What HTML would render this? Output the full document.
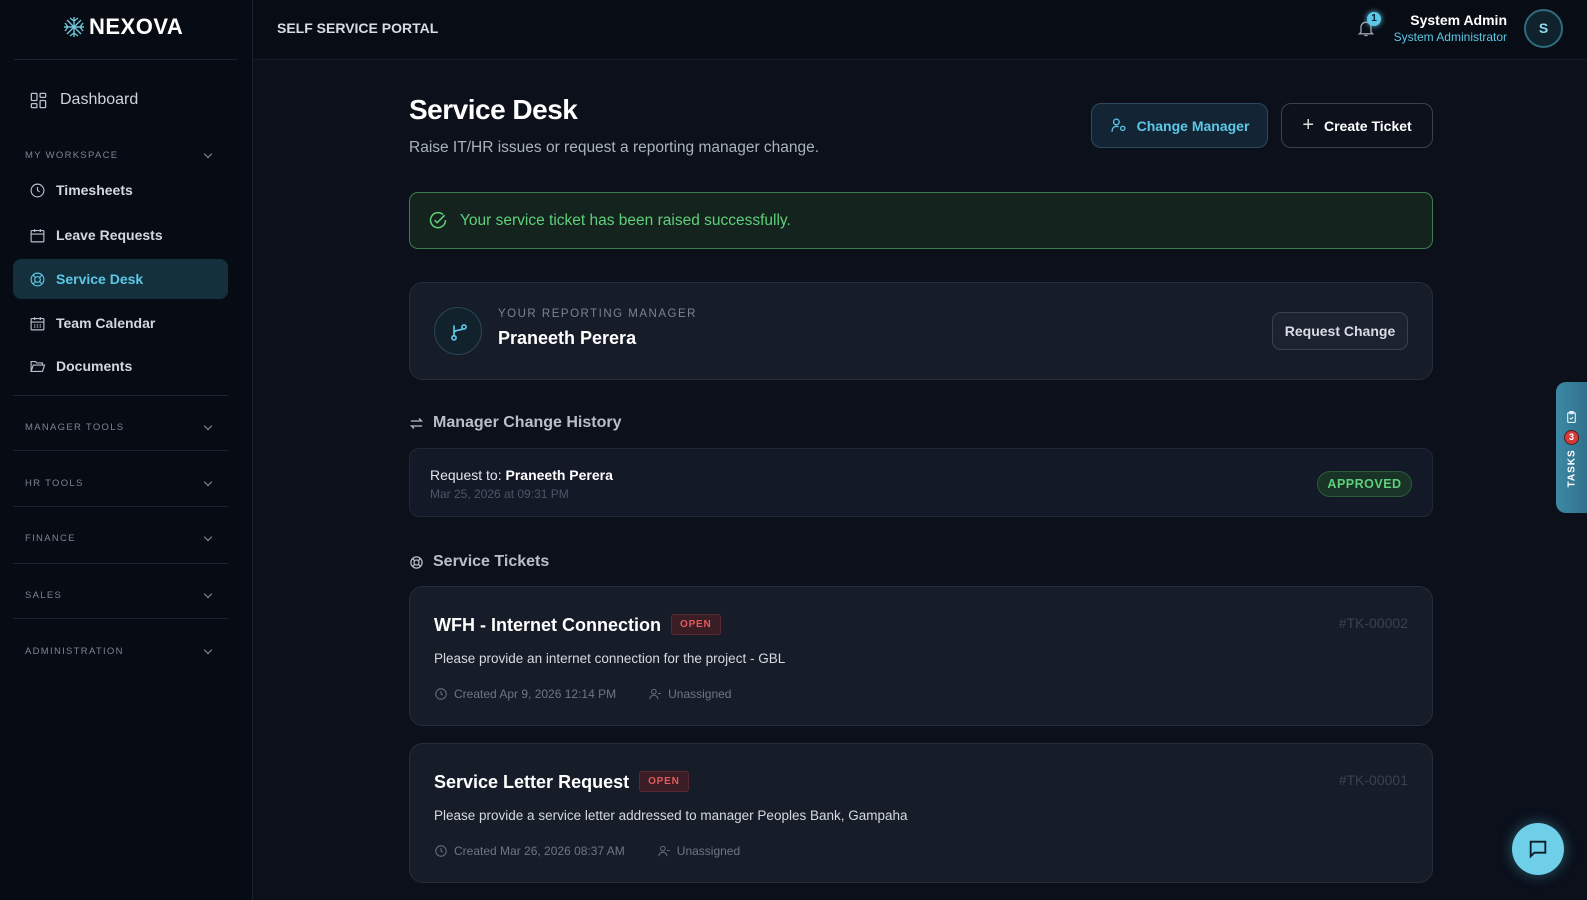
<!DOCTYPE html>
<html><head><meta charset="utf-8"><style>
*{box-sizing:border-box;margin:0;padding:0}
body{width:1587px;height:900px;overflow:hidden;background:#0b101b;font-family:"Liberation Sans",sans-serif;color:#e5e7eb;position:relative}
.sb{position:absolute;left:0;top:0;width:253px;height:900px;background:#070b13;border-right:1px solid #1a2130}
.logo{position:absolute;left:63px;top:14px;font-weight:bold;font-size:22px;color:#fff;letter-spacing:.5px;display:flex;align-items:center;gap:4px}
.lsep{position:absolute;left:14px;width:223px;top:59px;border-top:1px solid #1c2331}
.hdr{position:absolute;left:253px;top:0;right:0;height:60px;background:#080c15;border-bottom:1px solid #161d2a}
.it{position:absolute;left:13px;width:215px;height:40px;display:flex;align-items:center;padding-left:16px;gap:10px;font-size:14px;font-weight:bold;color:#d3d8e0}
.it svg{width:17px;height:17px;stroke:#b9c0cc;fill:none;stroke-width:1.6}
.act{background:#15303d;color:#5cc8e6;border-radius:8px}
.act svg{stroke:#5cc8e6}
.sec{position:absolute;left:25px;width:190px;font-size:9.5px;letter-spacing:1.3px;color:#7b8494;display:flex;justify-content:space-between;align-items:center}
.sec::after{content:"";width:5px;height:5px;border-right:1.3px solid #8a93a2;border-bottom:1.3px solid #8a93a2;transform:rotate(45deg);margin-right:4px;margin-top:-3px}
.hs{position:absolute;left:13px;width:215px;border-top:1px solid #1c2331}
.card{position:absolute;left:409px;width:1024px;border:1px solid #262e3c;background:#161c28;border-radius:14px}
.btn{position:absolute;top:103px;height:45px;border-radius:10px;display:flex;align-items:center;justify-content:center;gap:10px;font-weight:bold;font-size:14px}
.open{display:inline-block;font-size:10px;font-weight:bold;color:#e05b5b;background:#3b1d25;border:1px solid #5a2a31;border-radius:3px;padding:4px 8px;letter-spacing:.8px;vertical-align:middle;margin-left:10px;position:relative;top:-2px}
.tt{position:absolute;left:24px;font-size:18px;font-weight:bold;color:#fff}
.td{position:absolute;left:24px;font-size:13.5px;color:#d5d9e0}
.tm{position:absolute;left:24px;font-size:12px;color:#6e7685;display:flex;align-items:center;gap:6px}
.tm svg{width:14px;height:14px;stroke:#6e7685;fill:none;stroke-width:1.6}
.tid{position:absolute;right:24px;font-size:14px;color:#3a4252}
</style></head><body>
<div class="sb">
 <div class="logo"><svg width="22" height="22" viewBox="0 0 22 22" stroke="#6fc6d8" stroke-width="1.4"><path d="M11 1v20M1 11h20M4 4l14 14M18 4L4 18M7 2l4 3 4-3M7 20l4-3 4 3M2 7l3 4-3 4M20 7l-3 4 3 4"/></svg>NEXOVA</div>
 <div class="lsep"></div>
 <div class="it" style="top:80px;font-weight:normal;font-size:16px;color:#cfd4dc;gap:12px"><svg style="width:19px;height:19px" viewBox="0 0 24 24"><rect x="3" y="3" width="7" height="9" rx="1"/><rect x="14" y="3" width="7" height="5" rx="1"/><rect x="14" y="12" width="7" height="9" rx="1"/><rect x="3" y="16" width="7" height="5" rx="1"/></svg>Dashboard</div>
 <div class="sec" style="top:150px">MY WORKSPACE</div>
 <div class="it" style="top:170px"><svg viewBox="0 0 24 24"><circle cx="12" cy="12" r="9"/><path d="M12 7v5l3 2"/></svg>Timesheets</div>
 <div class="it" style="top:215px"><svg viewBox="0 0 24 24"><rect x="3" y="5" width="18" height="16" rx="1"/><path d="M3 10h18M8 3v4M16 3v4"/></svg>Leave Requests</div>
 <div class="it act" style="top:259px"><svg viewBox="0 0 24 24"><circle cx="12" cy="12" r="9"/><circle cx="12" cy="12" r="4"/><path d="M5.6 5.6l3.6 3.6M14.8 14.8l3.6 3.6M18.4 5.6l-3.6 3.6M9.2 14.8l-3.6 3.6"/></svg>Service Desk</div>
 <div class="it" style="top:303px"><svg viewBox="0 0 24 24"><rect x="3" y="5" width="18" height="16" rx="1"/><path d="M3 10h18M8 3v4M16 3v4M7 14h2M11 14h2M15 14h2M7 17h2M11 17h2M15 17h2"/></svg>Team Calendar</div>
 <div class="it" style="top:346px"><svg viewBox="0 0 24 24"><path d="M3 19V5h6l2 2h8v3M3 19l3-9h16l-3 9z"/></svg>Documents</div>
 <div class="hs" style="top:395px"></div>
 <div class="sec" style="top:422px">MANAGER TOOLS</div>
 <div class="hs" style="top:450px"></div>
 <div class="sec" style="top:478px">HR TOOLS</div>
 <div class="hs" style="top:506px"></div>
 <div class="sec" style="top:533px">FINANCE</div>
 <div class="hs" style="top:563px"></div>
 <div class="sec" style="top:590px">SALES</div>
 <div class="hs" style="top:618px"></div>
 <div class="sec" style="top:646px">ADMINISTRATION</div>
</div>
<div class="hdr">
 <div style="position:absolute;left:24px;top:20px;font-size:14px;font-weight:bold;color:#d8dce3">SELF SERVICE PORTAL</div>
 <svg style="position:absolute;left:1103px;top:17px" width="20" height="22" viewBox="0 0 24 24" fill="none" stroke="#9aa2ae" stroke-width="1.6"><path d="M6 17V11a6 6 0 0112 0v6l2 2H4zM10 21h4"/></svg>
 <div style="position:absolute;left:1114px;top:12px;width:14px;height:14px;border-radius:50%;background:#5cc8e6;color:#062030;font-size:10px;font-weight:bold;text-align:center;line-height:14px;box-shadow:0 0 6px #5cc8e6">1</div>
 <div style="position:absolute;right:80px;top:12px;text-align:right"><div style="font-size:14px;font-weight:bold;color:#fff">System Admin</div><div style="font-size:12px;color:#5cc8e6;margin-top:2px">System Administrator</div></div>
 <div style="position:absolute;left:1271px;top:9px;width:39px;height:39px;border-radius:50%;border:2px solid #2f6b7d;background:#10222c;color:#8fdcef;font-weight:bold;font-size:14px;text-align:center;line-height:35px">S</div>
</div>
<div style="position:absolute;left:409px;top:94px;font-size:28px;font-weight:bold;color:#fff;letter-spacing:-.5px">Service Desk</div>
<div style="position:absolute;left:409px;top:139px;font-size:15.5px;color:#aab2be">Raise IT/HR issues or request a reporting manager change.</div>
<div class="btn" style="left:1091px;width:177px;background:#132535;border:1px solid #2b4a5c;color:#5cc8e6"><svg width="17" height="17" viewBox="0 0 24 24" fill="none" stroke="#5cc8e6" stroke-width="1.8"><circle cx="9" cy="7" r="4"/><path d="M3 21v-2a6 6 0 019-5"/><circle cx="18" cy="16" r="3"/></svg>Change Manager</div>
<div class="btn" style="left:1281px;width:152px;background:#0c111c;border:1px solid #3a4150;color:#fff"><span style="font-size:20px;font-weight:normal;color:#ddd">+</span>Create Ticket</div>
<div style="position:absolute;left:409px;top:192px;width:1024px;height:57px;border:1px solid #3e7b4d;border-radius:9px;background:#15231f;display:flex;align-items:center;padding-left:18px;gap:12px;color:#5fd07b;font-size:15.5px"><svg width="20" height="20" viewBox="0 0 24 24" fill="none" stroke="#5fd07b" stroke-width="1.8"><path d="M21 11a9 9 0 11-3-6.7"/><path d="M8 11l3 3 9-9"/></svg>Your service ticket has been raised successfully.</div>
<div class="card" style="top:282px;height:98px">
 <div style="position:absolute;left:24px;top:24px;width:48px;height:48px;border-radius:50%;border:1px solid #2b4656;background:#12222d"><svg style="position:absolute;left:14px;top:14px" width="20" height="20" viewBox="0 0 24 24" fill="none" stroke="#5cc8e6" stroke-width="2"><circle cx="6" cy="19" r="2.5"/><circle cx="18" cy="6" r="2.5"/><path d="M6 16.5V4M6 13c0-4 10-3 11-5"/></svg></div>
 <div style="position:absolute;left:88px;top:25px;font-size:11.5px;letter-spacing:1.5px;color:#7b8391">YOUR REPORTING MANAGER</div>
 <div style="position:absolute;left:88px;top:45px;font-size:18px;font-weight:bold;color:#fff">Praneeth Perera</div>
 <div style="position:absolute;right:24px;top:29px;width:136px;height:38px;border:1px solid #3a4252;border-radius:9px;background:#1c2230;font-size:14px;font-weight:bold;color:#d8dde5;text-align:center;line-height:36px">Request Change</div>
</div>
<div style="position:absolute;left:409px;top:414px;font-size:16px;font-weight:bold;color:#b8bfca;display:flex;align-items:center;gap:9px"><svg width="15" height="15" viewBox="0 0 24 24" fill="none" stroke="#b8bfca" stroke-width="2"><path d="M3 8h17l-4-4M21 16H4l4 4"/></svg>Manager Change History</div>
<div class="card" style="top:448px;height:69px;border-radius:10px;border-color:#202735;background:#131926">
 <div style="position:absolute;left:20px;top:18px;font-size:14px;color:#e2e6ec">Request to: <b style="color:#fff">Praneeth Perera</b></div>
 <div style="position:absolute;left:20px;top:38px;font-size:12px;color:#4d5566">Mar 25, 2026 at 09:31 PM</div>
 <div style="position:absolute;right:20px;top:22px;width:95px;height:26px;border-radius:13px;background:#193326;border:1px solid #2c5a3c;color:#5fd07b;font-size:12.5px;font-weight:bold;text-align:center;line-height:24px;letter-spacing:.5px">APPROVED</div>
</div>
<div style="position:absolute;left:409px;top:553px;font-size:16px;font-weight:bold;color:#b8bfca;display:flex;align-items:center;gap:9px"><svg width="15" height="15" viewBox="0 0 24 24" fill="none" stroke="#b8bfca" stroke-width="2"><circle cx="12" cy="12" r="9"/><circle cx="12" cy="12" r="4"/><path d="M5.6 5.6l3.6 3.6M14.8 14.8l3.6 3.6M18.4 5.6l-3.6 3.6M9.2 14.8l-3.6 3.6"/></svg>Service Tickets</div>
<div class="card" style="top:586px;height:140px">
 <div class="tt" style="top:28px">WFH - Internet Connection<span class="open">OPEN</span></div>
 <div class="tid" style="top:28px">#TK-00002</div>
 <div class="td" style="top:64px">Please provide an internet connection for the project - GBL</div>
 <div class="tm" style="top:100px"><svg viewBox="0 0 24 24"><circle cx="12" cy="12" r="9"/><path d="M12 7v5l3 2"/></svg>Created Apr 9, 2026 12:14 PM<span style="width:20px"></span><svg viewBox="0 0 24 24"><circle cx="10" cy="8" r="4"/><path d="M3 21a7 7 0 0114 0M17 11h5"/></svg>Unassigned</div>
</div>
<div class="card" style="top:743px;height:140px">
 <div class="tt" style="top:28px">Service Letter Request<span class="open">OPEN</span></div>
 <div class="tid" style="top:28px">#TK-00001</div>
 <div class="td" style="top:64px">Please provide a service letter addressed to manager Peoples Bank, Gampaha</div>
 <div class="tm" style="top:100px"><svg viewBox="0 0 24 24"><circle cx="12" cy="12" r="9"/><path d="M12 7v5l3 2"/></svg>Created Mar 26, 2026 08:37 AM<span style="width:20px"></span><svg viewBox="0 0 24 24"><circle cx="10" cy="8" r="4"/><path d="M3 21a7 7 0 0114 0M17 11h5"/></svg>Unassigned</div>
</div>
<div style="position:absolute;left:1556px;top:382px;width:40px;height:131px;border-radius:10px 0 0 10px;background:linear-gradient(90deg,#3d89a6,#2c6a83)">
 <svg style="position:absolute;left:9px;top:28px" width="13" height="14" viewBox="0 0 24 24" fill="none" stroke="#e8f6fb" stroke-width="2"><rect x="5" y="4" width="14" height="18" rx="2"/><path d="M9 2h6v4H9zM9 14l2 2 4-4"/></svg>
 <div style="position:absolute;left:8px;top:48px;width:15px;height:15px;border-radius:50%;background:#d43c3c;border:1px solid #5a1a1a;color:#fff;font-size:9px;font-weight:bold;text-align:center;line-height:13px">3</div>
 <div style="position:absolute;left:-2px;top:78px;width:36px;transform:rotate(-90deg);transform-origin:center;font-size:10px;font-weight:bold;color:#fff;letter-spacing:1px;text-align:center;top:82px">TASKS</div>
</div>
<div style="position:absolute;left:1512px;top:823px;width:52px;height:52px;border-radius:50%;background:#6fcfe9;box-shadow:0 0 14px rgba(90,200,230,.4)"><svg style="position:absolute;left:15px;top:15px" width="22" height="22" viewBox="0 0 24 24" fill="none" stroke="#0b1a24" stroke-width="2"><path d="M4 4h16v12H8l-4 4z"/></svg></div>
</body></html>
